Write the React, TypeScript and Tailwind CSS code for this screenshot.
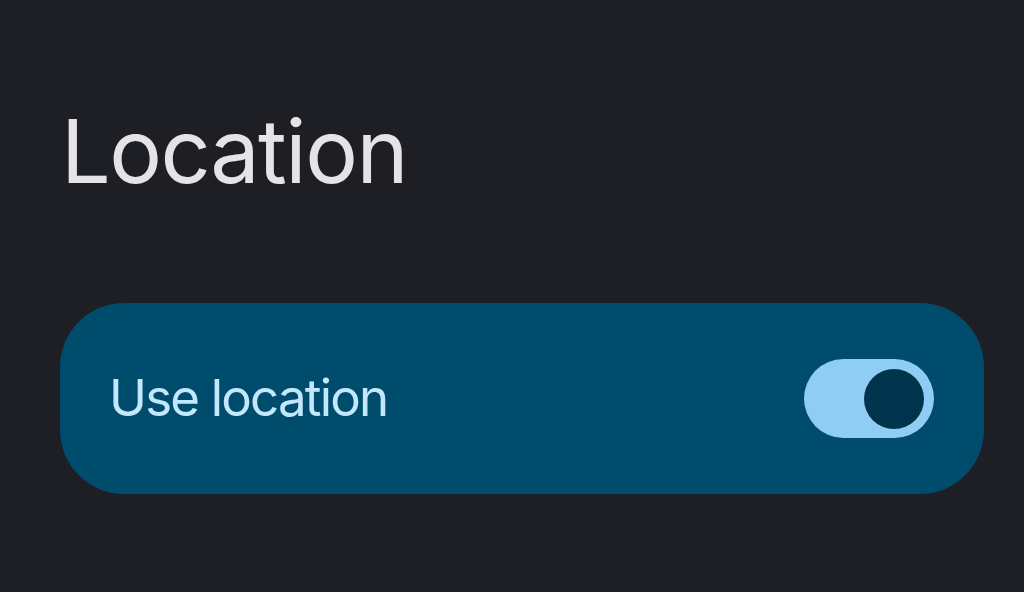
export default function App() {
  return (
    <div className="w-[1024px] h-[592px] bg-[#1e1f24] flex flex-col pl-[60px] pr-[40px] pt-[99px] overflow-hidden" style={{ fontFamily: 'Inter, "Open Sans", sans-serif' }}>
      <h1 className="text-[88px] leading-[104px] text-[#e3e3e8] font-normal pl-[1px] tracking-[-1.5px]">Location</h1>
      <div className="mt-[100px] h-[191px] rounded-[64px] bg-[#004c6c] flex items-center justify-between pl-[49px] pr-[50px]">
        <span className="text-[51px] text-[#c3e8fd] tracking-[-1.8px]">Use location</span>
        <div className="w-[130px] h-[79px] rounded-full bg-[#8fcdf4] flex items-center justify-end pr-[10px]">
          <div className="w-[60px] h-[60px] rounded-full bg-[#00344c]" />
        </div>
      </div>
    </div>
  );
}
